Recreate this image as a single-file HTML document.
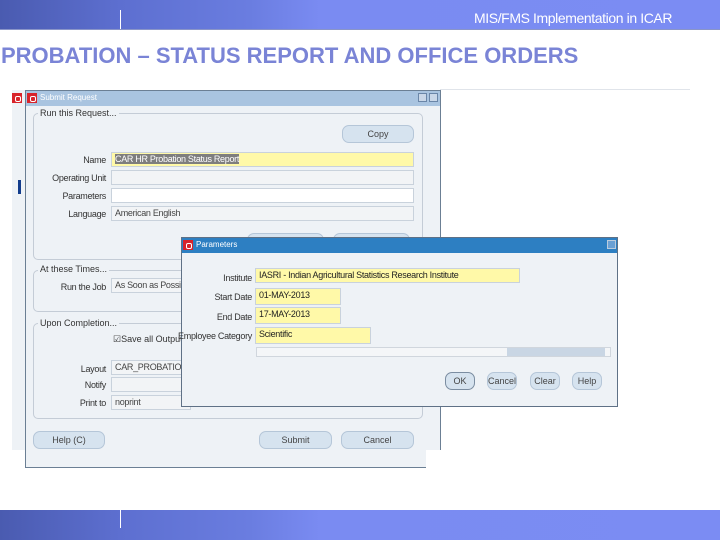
<!DOCTYPE html>
<html><head><meta charset="utf-8"><style>
*{margin:0;padding:0;box-sizing:border-box}
body{width:720px;height:540px;position:relative;background:#fff;font-family:"Liberation Sans",sans-serif;overflow:hidden}
.a{position:absolute}
.band{background:linear-gradient(90deg,#4a5bb0 0,#5d6fd0 120px,#6a7de0 250px,#7a8bf2 320px,#7b8cf3 100%)}
.lbl{position:absolute;font-size:9px;color:#333;text-align:right;letter-spacing:-0.3px;white-space:nowrap}
.fld{position:absolute;height:15px;border:1px solid #c9d2dc;background:#f2f4f6;font-size:9px;color:#444;padding-left:3px;line-height:13px;letter-spacing:-0.3px;white-space:nowrap;overflow:hidden}
.y{background:#fff9a8}
.btn{position:absolute;height:18px;border:1px solid #b5c6d8;border-radius:7px;background:#d6e3ef;font-size:9px;color:#444;text-align:center;line-height:16px}
.grp{position:absolute;border:1px solid #c4ccd6;border-radius:5px}
.gt{position:absolute;background:#eef2f6;font-size:9px;color:#333;padding:0 2px;white-space:nowrap}
.ic{position:absolute;width:10px;height:10px;background:#d8232a;border:2px solid #d8232a}
.ic::after{content:"";position:absolute;left:1px;top:1px;width:4px;height:4px;border:1px solid #fff;border-radius:2px}
</style></head><body>
<div class="a band" style="left:0;top:0;width:720px;height:29px"></div>
<div class="a" style="left:120px;top:10px;width:1px;height:19px;background:#fff"></div>
<div class="a" style="left:0;top:29px;width:720px;height:1px;background:#8a95c8"></div>
<div class="a" style="left:474px;top:10px;font-size:14px;color:#fff;letter-spacing:-0.4px;white-space:nowrap">MIS/FMS Implementation in ICAR</div>
<div class="a" style="left:1px;top:43px;font-size:22px;font-weight:bold;color:#7a84d6;white-space:nowrap">PROBATION – STATUS REPORT AND OFFICE ORDERS</div>
<div class="a" style="left:440px;top:89px;width:250px;height:1px;background:#e0e4ea"></div>

<div class="a" style="left:12px;top:90px;width:14px;height:360px;background:#eef2f6"></div>
<div class="a" style="left:18px;top:180px;width:3px;height:14px;background:#123c8c"></div>
<div class="ic" style="left:12px;top:93px"></div>
<div class="a" style="left:25px;top:90px;width:416px;height:378px;background:#eef2f6;border:1px solid #6b7f94"></div>
<div class="a" style="left:26px;top:91px;width:414px;height:15px;background:#a9c4e0"></div>
<div class="ic" style="left:27px;top:93px"></div>
<div class="a" style="left:40px;top:93px;font-size:8px;color:#fff">Submit Request</div>
<div class="a" style="left:418px;top:93px;width:9px;height:9px;background:#c9d7e8;border:1px solid #6a86a8"></div>
<div class="a" style="left:429px;top:93px;width:9px;height:9px;background:#c9d7e8;border:1px solid #6a86a8"></div>

<div class="grp" style="left:33px;top:113px;width:390px;height:147px"></div>
<div class="gt" style="left:38px;top:108px">Run this Request...</div>
<div class="btn" style="left:342px;top:125px;width:72px">Copy</div>
<div class="lbl" style="left:40px;top:155px;width:66px">Name</div>
<div class="fld y" style="left:111px;top:152px;width:303px"><span style="background:#7e7e7e;color:#fff">CAR HR Probation Status Report</span></div>
<div class="lbl" style="left:40px;top:173px;width:66px">Operating Unit</div>
<div class="fld" style="left:111px;top:170px;width:303px"></div>
<div class="lbl" style="left:40px;top:191px;width:66px">Parameters</div>
<div class="fld" style="left:111px;top:188px;width:303px;background:#fff"></div>
<div class="lbl" style="left:40px;top:209px;width:66px">Language</div>
<div class="fld" style="left:111px;top:206px;width:303px">American English</div>
<div class="btn" style="left:247px;top:233px;width:77px"></div>
<div class="btn" style="left:333px;top:233px;width:77px"></div>

<div class="grp" style="left:33px;top:270px;width:390px;height:42px"></div>
<div class="gt" style="left:38px;top:264px">At these Times...</div>
<div class="lbl" style="left:40px;top:282px;width:66px">Run the Job</div>
<div class="fld" style="left:111px;top:278px;width:80px">As Soon as Possible</div>

<div class="grp" style="left:33px;top:323px;width:390px;height:96px"></div>
<div class="gt" style="left:38px;top:318px">Upon Completion...</div>
<div class="a" style="left:113px;top:334px;font-size:9px;color:#333">☑Save all Output Files</div>
<div class="lbl" style="left:40px;top:364px;width:66px">Layout</div>
<div class="fld" style="left:111px;top:360px;width:80px">CAR_PROBATION_</div>
<div class="lbl" style="left:40px;top:380px;width:66px">Notify</div>
<div class="fld" style="left:111px;top:377px;width:80px"></div>
<div class="lbl" style="left:40px;top:398px;width:66px">Print to</div>
<div class="fld" style="left:111px;top:395px;width:80px">noprint</div>
<div class="btn" style="left:33px;top:431px;width:72px">Help (C)</div>
<div class="btn" style="left:259px;top:431px;width:73px">Submit</div>
<div class="btn" style="left:341px;top:431px;width:73px">Cancel</div>
<div class="a" style="left:426px;top:450px;width:16px;height:20px;background:#fff"></div>

<div class="a" style="left:181px;top:237px;width:437px;height:170px;background:#eef2f6;border:1px solid #5f7186"></div>
<div class="a" style="left:182px;top:238px;width:435px;height:15px;background:#2d7fc2"></div>
<div class="ic" style="left:183px;top:240px"></div>
<div class="a" style="left:196px;top:240px;font-size:8px;color:#fff">Parameters</div>
<div class="a" style="left:607px;top:240px;width:9px;height:9px;background:#6aa0d4;border:1px solid #bcd"></div>
<div class="lbl" style="left:186px;top:273px;width:66px">Institute</div>
<div class="fld y" style="left:255px;top:268px;width:265px;color:#222">IASRI - Indian Agricultural Statistics Research Institute</div>
<div class="lbl" style="left:186px;top:292px;width:66px">Start Date</div>
<div class="fld y" style="left:255px;top:288px;width:86px;height:17px;color:#222">01-MAY-2013</div>
<div class="lbl" style="left:186px;top:312px;width:66px">End Date</div>
<div class="fld y" style="left:255px;top:307px;width:86px;height:17px;color:#222">17-MAY-2013</div>
<div class="lbl" style="left:172px;top:331px;width:80px">Employee Category</div>
<div class="fld y" style="left:255px;top:327px;width:116px;height:17px;color:#222">Scientific</div>
<div class="a" style="left:256px;top:347px;width:355px;height:10px;background:#f4f6f8;border:1px solid #d0d6dd"></div>
<div class="a" style="left:507px;top:348px;width:98px;height:8px;background:#c9d6e4"></div>
<div class="btn" style="left:445px;top:372px;width:30px;border-color:#7b8da1">OK</div>
<div class="btn" style="left:487px;top:372px;width:30px">Cancel</div>
<div class="btn" style="left:530px;top:372px;width:30px">Clear</div>
<div class="btn" style="left:572px;top:372px;width:30px">Help</div>

<div class="a band" style="left:0;top:510px;width:720px;height:30px"></div>
<div class="a" style="left:120px;top:510px;width:1px;height:18px;background:#fff"></div>
</body></html>
